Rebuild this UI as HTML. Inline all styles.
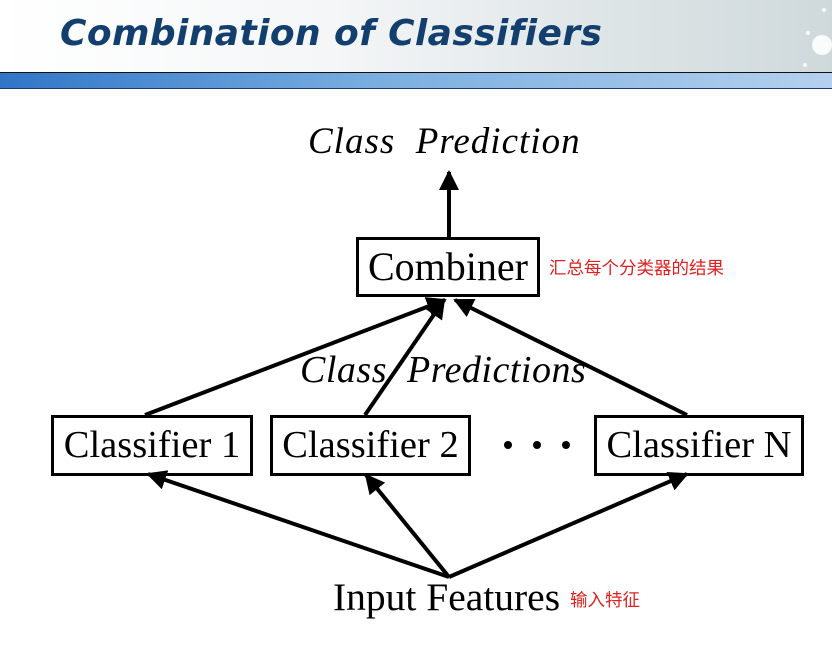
<html><head><style>
body{margin:0;width:832px;height:648px;background:#fff;position:relative;overflow:hidden;font-family:"Liberation Serif",serif}
.hdr{position:absolute;left:0;top:0;width:832px;height:72px;background:linear-gradient(90deg,#fff 0%,#f4f6f7 40%,#dde4e6 75%,#cfd9dc 100%)}
.t{position:absolute;left:60px;top:13px;font:italic bold 36px "DejaVu Sans","Liberation Sans",sans-serif;color:#123f6e;letter-spacing:0.4px}
.bar{position:absolute;left:0;top:72px;width:832px;height:15px;border-top:1px solid #111;border-bottom:1px solid #1a3a6a;background:linear-gradient(90deg,#2f76c8,#7aaee0 45%,#b4d0ee 100%)}
.box{position:absolute;border:3px solid #000;box-sizing:border-box;font-size:40px;text-align:center;line-height:54px;white-space:nowrap}
.c{font-size:38.5px}
.it{position:absolute;font-style:italic;white-space:nowrap}
.cn{position:absolute;color:#e02020;font:17.5px "Noto Sans CJK SC",sans-serif}
</style></head><body>
<div class="hdr"></div>
<div class="t">Combination of Classifiers</div>
<div class="bar"></div>
<svg width="832" height="648" style="position:absolute;left:0;top:0">
<defs><marker id="a" viewBox="0 0 10 10" refX="9" refY="5" markerWidth="5" markerHeight="5" orient="auto" markerUnits="strokeWidth"><path d="M0,0 L10,5 L0,10 z" fill="#000"/></marker></defs>
<g stroke="#000" stroke-width="4" marker-end="url(#a)">
<line x1="449" y1="237" x2="449" y2="172"/>
<line x1="145" y1="415" x2="445" y2="300"/>
<line x1="365" y1="415" x2="444" y2="300"/>
<line x1="687" y1="415" x2="455" y2="300"/>
<line x1="449" y1="577" x2="148" y2="474"/>
<line x1="449" y1="577" x2="366" y2="475"/>
<line x1="449" y1="577" x2="687" y2="474"/>
</g>
<g fill="#000">
<circle cx="508" cy="445" r="4"/><circle cx="537" cy="445" r="4"/><circle cx="566" cy="445" r="4"/>
</g>
<g fill="#fff" opacity="0.9"><circle cx="822" cy="45" r="10"/><circle cx="808" cy="33" r="2"/><circle cx="805" cy="65" r="2"/><circle cx="824" cy="10" r="2"/></g>
</svg>
<div class="it" style="left:308px;top:120px;font-size:37px;letter-spacing:1px">Class&nbsp; Prediction</div>
<div class="box" style="left:356px;top:237px;width:184px;height:60px">Combiner</div>
<div class="cn" style="left:549px;top:255px">汇总每个分类器的结果</div>
<div class="it" style="left:300px;top:348px;font-size:38px;letter-spacing:0.5px">Class&nbsp; Predictions</div>
<div class="box c" style="left:51px;top:415px;width:202px;height:61px">Classifier 1</div>
<div class="box c" style="left:270px;top:415px;width:201px;height:61px">Classifier 2</div>
<div class="box c" style="left:594px;top:415px;width:210px;height:61px">Classifier N</div>
<div style="position:absolute;left:333px;top:574px;font-size:39.5px;white-space:nowrap">Input Features</div>
<div class="cn" style="left:570px;top:587px">输入特征</div>
</body></html>
